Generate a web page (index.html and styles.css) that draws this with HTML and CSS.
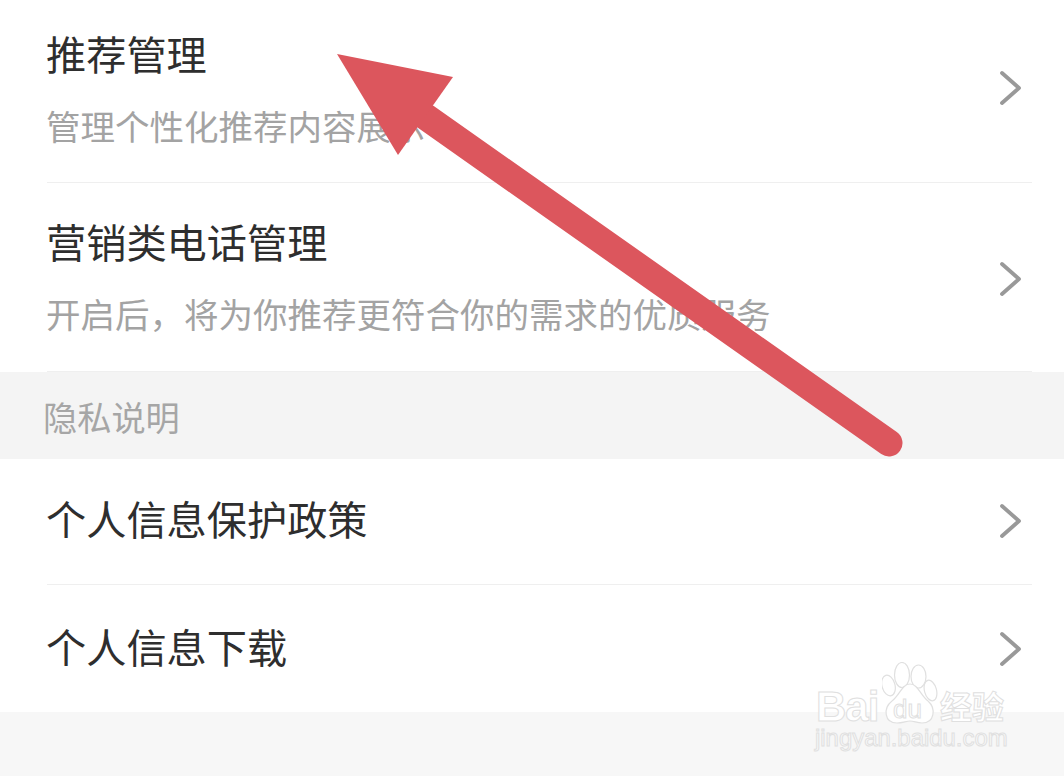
FILE: index.html
```html
<!DOCTYPE html>
<html lang="zh">
<head>
<meta charset="utf-8">
<title>隐私设置</title>
<link rel="stylesheet" href="styles.css">
</head>
<body>
<div class="screen">
  <div class="group">
    <div class="row row-a">
      <div class="copy">
        <div class="title">推荐管理</div>
        <div class="sub">管理个性化推荐内容展示</div>
      </div>
      <svg class="chev" viewBox="0 0 24 36"><path d="M3 3 L20 18 L3 33"/></svg>
    </div>
    <div class="row row-b">
      <div class="copy">
        <div class="title">营销类电话管理</div>
        <div class="sub">开启后，将为你推荐更符合你的需求的优质服务</div>
      </div>
      <svg class="chev" viewBox="0 0 24 36"><path d="M3 3 L20 18 L3 33"/></svg>
    </div>
  </div>
  <div class="section">隐私说明</div>
  <div class="group">
    <div class="row row-c">
      <div class="title">个人信息保护政策</div>
      <svg class="chev" viewBox="0 0 24 36"><path d="M3 3 L20 18 L3 33"/></svg>
    </div>
    <div class="row row-d">
      <div class="title">个人信息下载</div>
      <svg class="chev" viewBox="0 0 24 36"><path d="M3 3 L20 18 L3 33"/></svg>
    </div>
  </div>
  <div class="foot"></div>

  <svg class="arrow" viewBox="0 0 1064 776">
    <path class="arrow-shaft" d="M426 117 L889 443"/>
    <path class="arrow-head" d="M337 54 L453 77 L398 155 Z"/>
  </svg>

  <div class="mark">
    <div class="mark-top">
      <span class="mark-bai">Bai</span>
      <svg class="paw" viewBox="0 0 56 62">
        <ellipse cx="6.500" cy="23.500" rx="6.500" ry="10.500" transform="rotate(-15 6.500 23.500)"/>
        <ellipse cx="20" cy="13" rx="7.500" ry="12.500"/>
        <ellipse cx="36.500" cy="14.500" rx="7.500" ry="11.500"/>
        <ellipse cx="48.500" cy="28.500" rx="6" ry="10.500" transform="rotate(-15 48.500 28.500)"/>
        <path d="M28 22 C20 22 18 33 10 39 C1 46 2 61 15 61 C21 61 24 59 28 59 C32 59 35 61 40 61 C53 61 54 46 46 39 C38 33 36 22 28 22 Z"/>
      </svg>
      <span class="mark-du">du</span>
      <span class="mark-cn">经验</span>
    </div>
    <div class="mark-url">jingyan.baidu.com</div>
  </div>
</div>
</body>
</html>
```

FILE: styles.css
```css
html, body {
  margin: 0;
  padding: 0;
  background: #fff;
}

.screen {
  position: relative;
  width: 1064px;
  height: 776px;
  overflow: hidden;
  display: flex;
  flex-direction: column;
  font-family: "Noto Sans CJK SC", "Noto Sans", sans-serif;
  background: #fff;
}

.row {
  box-sizing: border-box;
  margin-left: 47px;
  margin-right: 32px;
  padding-right: 9px;
  display: flex;
  align-items: center;
  justify-content: space-between;
  border-bottom: 1px solid #efefef;
}

.row-a { height: 183px; padding-bottom: 7px; }
.row-b { height: 189px; padding-bottom: 3px; }
.row-c { height: 126px; padding-bottom: 3px; }
.row-d { height: 127px; border-bottom: none; padding-bottom: 1px; }

.row-b .chev { margin-top: 6px; }
.row-c .chev,
.row-d .chev { margin-top: 2px; }
.row-c .title,
.row-d .title { margin-bottom: 4px; }

.copy {
  display: flex;
  flex-direction: column;
  gap: 27px;
}

.title {
  margin-left: -1px;
  font-size: 40.200px;
  line-height: 48px;
  color: #2e2e2e;
}

.sub {
  margin-left: -1px;
  font-size: 34.500px;
  line-height: 42px;
  color: #a3a3a3;
  white-space: nowrap;
}

.chev {
  width: 24px;
  height: 36px;
  flex: none;
}

.chev path {
  fill: none;
  stroke: #999;
  stroke-width: 3.800px;
  stroke-linecap: round;
  stroke-linejoin: round;
}

.section {
  box-sizing: border-box;
  height: 87px;
  padding-left: 43px;
  display: flex;
  align-items: center;
  background: #f4f4f4;
  font-size: 34.200px;
  color: #a6a6a6;
}

.foot {
  flex: 1;
  background: #f7f7f7;
}

.arrow {
  position: absolute;
  left: 0;
  top: 0;
  width: 1064px;
  height: 776px;
}

.arrow-shaft {
  fill: none;
  stroke: #dc565d;
  stroke-width: 27px;
  stroke-linecap: round;
}

.arrow-head {
  fill: #dc565d;
}

.mark {
  position: absolute;
  left: 815px;
  top: 660px;
  width: 200px;
  font-family: "Liberation Sans", sans-serif;
  color: #fff;
}

.mark-top {
  position: relative;
  height: 66px;
}

.mark-bai,
.mark-du,
.mark-cn,
.mark-url {
  position: absolute;
  color: #fff;
  -webkit-text-stroke: 1px #e0e0e0;
  white-space: nowrap;
}

.mark-bai {
  left: 1px;
  top: 31px;
  font-size: 42px;
  line-height: 32px;
  font-weight: 700;
  letter-spacing: -1px;
}

.paw {
  position: absolute;
  left: 67px;
  top: 2px;
  width: 56px;
  height: 62px;
  fill: #fff;
  stroke: #e0e0e0;
  stroke-width: 1.200px;
}

.mark-du {
  left: 78px;
  top: 36px;
  font-size: 26px;
  line-height: 26px;
}

.mark-cn {
  left: 125px;
  top: 28px;
  font-family: "Noto Sans CJK SC", sans-serif;
  font-size: 32px;
  line-height: 34px;
  font-weight: 700;
}

.mark-url {
  left: 0;
  top: 66px;
  font-size: 23.900px;
  line-height: 24px;
  color: #fafafa;
}
```
